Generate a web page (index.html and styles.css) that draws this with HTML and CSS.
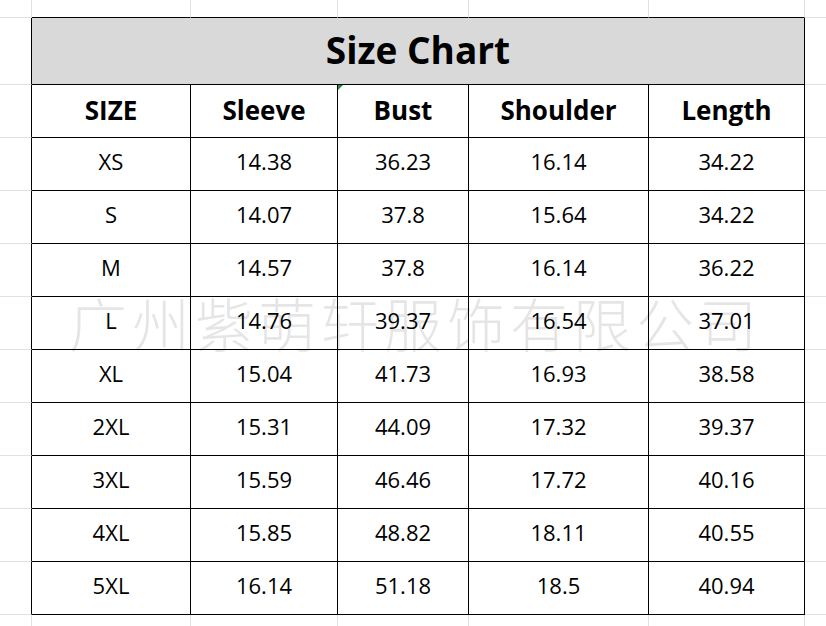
FILE: index.html
```html
<!DOCTYPE html>
<html lang="en">
<head>
<meta charset="utf-8">
<title>Size Chart</title>
<link rel="stylesheet" href="styles.css">
</head>
<body>
<div class="sheet">
  <div class="grid">
    <div class="c"></div><div class="c top"></div><div class="c top"></div><div class="c top"></div><div class="c top"></div><div class="c top"></div><div class="c"></div>

    <div class="c lft"></div><div class="c title">Size Chart</div><div class="c"></div>

    <div class="c lft"></div><div class="c t h">SIZE</div><div class="c t h">Sleeve</div><div class="c t h mark">Bust</div><div class="c t h">Shoulder</div><div class="c t h">Length</div><div class="c"></div>

    <div class="c lft"></div><div class="c t">XS</div><div class="c t">14.38</div><div class="c t">36.23</div><div class="c t">16.14</div><div class="c t">34.22</div><div class="c"></div>
    <div class="c lft"></div><div class="c t">S</div><div class="c t">14.07</div><div class="c t">37.8</div><div class="c t">15.64</div><div class="c t">34.22</div><div class="c"></div>
    <div class="c lft"></div><div class="c t">M</div><div class="c t">14.57</div><div class="c t">37.8</div><div class="c t">16.14</div><div class="c t">36.22</div><div class="c"></div>
    <div class="c lft"></div><div class="c t">L</div><div class="c t">14.76</div><div class="c t">39.37</div><div class="c t">16.54</div><div class="c t">37.01</div><div class="c"></div>
    <div class="c lft"></div><div class="c t">XL</div><div class="c t">15.04</div><div class="c t">41.73</div><div class="c t">16.93</div><div class="c t">38.58</div><div class="c"></div>
    <div class="c lft"></div><div class="c t">2XL</div><div class="c t">15.31</div><div class="c t">44.09</div><div class="c t">17.32</div><div class="c t">39.37</div><div class="c"></div>
    <div class="c lft"></div><div class="c t">3XL</div><div class="c t">15.59</div><div class="c t">46.46</div><div class="c t">17.72</div><div class="c t">40.16</div><div class="c"></div>
    <div class="c lft"></div><div class="c t">4XL</div><div class="c t">15.85</div><div class="c t">48.82</div><div class="c t">18.11</div><div class="c t">40.55</div><div class="c"></div>
    <div class="c lft"></div><div class="c t">5XL</div><div class="c t">16.14</div><div class="c t">51.18</div><div class="c t">18.5</div><div class="c t">40.94</div><div class="c"></div>

    <div class="c"></div><div class="c"></div><div class="c"></div><div class="c"></div><div class="c"></div><div class="c"></div><div class="c"></div>
  </div>
  <div class="watermark">广州紫萌轩服饰有限公司</div>
</div>
</body>
</html>
```

FILE: styles.css
```css
html, body {
  margin: 0;
  padding: 0;
  background: #ffffff;
  overflow: hidden;
}

.sheet {
  position: relative;
  width: 826px;
  height: 626px;
  overflow: hidden;
  font-family: "Open Sans", "Noto Sans", sans-serif;
  color: #000000;
}

.grid {
  display: grid;
  grid-template-columns: 32px 159px 147px 131px 180px 156px 40px;
  grid-template-rows: 18px 67px repeat(10, 53px) 53px;
}

.c {
  box-sizing: border-box;
  border-right: 1px solid #e1e1e1;
  border-bottom: 1px solid #e1e1e1;
  display: flex;
  align-items: center;
  justify-content: center;
}

.top {
  border-bottom-color: #000000;
}

.lft {
  border-right-color: #000000;
}

.t {
  border-right-color: #000000;
  border-bottom-color: #000000;
  font-size: 22px;
  padding-bottom: 6px;
  position: relative;
}

.h {
  font-size: 26px;
  font-weight: 700;
  padding-bottom: 2px;
}

.title {
  grid-column: span 5;
  background: #d9d9d9;
  border-right-color: #000000;
  border-bottom-color: #000000;
  font-size: 37px;
  font-weight: 700;
  padding-bottom: 3px;
}

.mark::before {
  content: "";
  position: absolute;
  left: 0;
  top: 0;
  width: 0;
  height: 0;
  border-top: 5px solid #1e8c3c;
  border-right: 5px solid transparent;
}

.watermark {
  position: absolute;
  left: 69px;
  top: 287px;
  font-family: "Noto Sans CJK SC", sans-serif;
  font-weight: 300;
  font-size: 58px;
  letter-spacing: 5px;
  line-height: 70px;
  color: rgba(0, 0, 0, 0.1);
  white-space: nowrap;
  pointer-events: none;
}
```
